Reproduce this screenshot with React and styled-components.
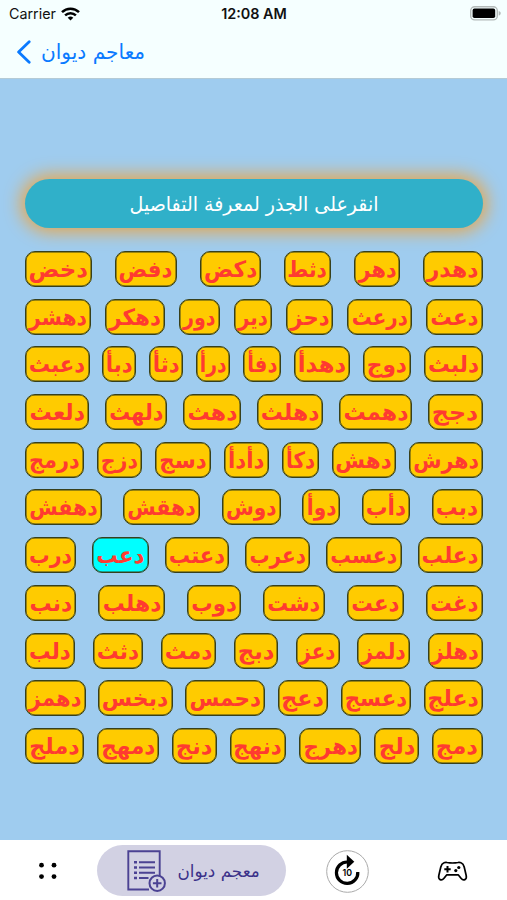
import React, { useLayoutEffect, useRef, useState } from 'react'
import styled, { createGlobalStyle } from 'styled-components'

const rows = [
  [['دهدر', 59.5], ['دهر', 46], ['دثط', 47.5], ['دكض', 61], ['دفض', 62], ['دخض', 67]],
  [['دعث', 56.5], ['درعث', 64.5], ['دحز', 47.5], ['دير', 38], ['دور', 41], ['دهكر', 59.5], ['دهشر', 66]],
  [['دلبث', 59], ['دوج', 48.5], ['دهدأ', 56.5], ['دفأ', 38.5], ['درأ', 34.5], ['دثأ', 34.5], ['دبأ', 34.5], ['دعبث', 64.5]],
  [['دجج', 54.5], ['دهمث', 73], ['دهلث', 66.5], ['دهث', 58], ['دلهث', 62.5], ['دلعث', 64]],
  [['دهرش', 73.5], ['دهش', 64.5], ['دكأ', 37], ['دأدأ', 45], ['دسج', 55.5], ['دزج', 45.5], ['درمج', 59]],
  [['دبب', 50.5], ['دأب', 48.5], ['دوأ', 37.5], ['دوش', 59], ['دهقش', 76.5], ['دهفش', 76.5]],
  [['دعلب', 65], ['دعسب', 75.5], ['دعرب', 65], ['دعتب', 64.5], ['دعب', 56.5], ['درب', 51]],
  [['دغت', 56.5], ['دعت', 56.5], ['دشت', 61.5], ['دوب', 53.5], ['دهلب', 66.5], ['دنب', 51]],
  [['دهلز', 55], ['دلمز', 52.5], ['دعز', 44], ['دبج', 44.5], ['دمث', 55.5], ['دثث', 50.5], ['دلب', 50]],
  [['دعلج', 59], ['دعسج', 70.5], ['دعج', 50.5], ['دحمس', 80], ['دبخس', 74.5], ['دهمز', 60.5]],
  [['دمج', 50.5], ['دلج', 44.5], ['دهرج', 62], ['دنهج', 56.5], ['دنج', 44.5], ['دمهج', 62.5], ['دملج', 58.5]],
]

// Stretches or squeezes a single line of text to the given width
const FitText = ({ width, children }) => {
  const ref = useRef(null)
  const [scale, setScale] = useState(1)

  useLayoutEffect(() => {
    setScale(width / ref.current.offsetWidth)
  }, [width, children])

  return (
    <Fitted ref={ref} style={{ transform: `scaleX(${scale})` }}>
      {children}
    </Fitted>
  )
}

const WifiIcon = () => (
  <svg width="19" height="14" viewBox="0 0 19 14" fill="none" stroke="#000" strokeWidth="2.5">
    <path d="M1 5.2a12.2 12.2 0 0 1 17 0" />
    <path d="M4.1 8.4a7.8 7.8 0 0 1 10.8 0" />
    <path d="M6.7 10.7a4.2 4.2 0 0 1 5.6 0L9.5 13.6z" fill="#000" stroke="none" />
  </svg>
)

const BatteryIcon = () => (
  <svg width="31" height="15" viewBox="0 0 31 15">
    <rect x="0.7" y="0.7" width="26.6" height="13.2" rx="4" fill="#f5ffff" stroke="#b3bab9" strokeWidth="1.4" />
    <rect x="2.6" y="2.6" width="22.6" height="9.4" rx="1.8" fill="#000" />
    <path d="M28.7 5c1.6.4 2 1.4 2 2.3s-.4 1.9-2 2.3z" fill="#b3bab9" />
  </svg>
)

const BackIcon = () => (
  <svg width="15" height="24" viewBox="0 0 15 24" fill="none" stroke="#0a7aff" strokeWidth="2.8">
    <path d="M13.2 1.8L2.6 12l10.6 10.2" strokeLinecap="round" strokeLinejoin="round" />
  </svg>
)

const DotsIcon = () => (
  <svg width="20" height="18" viewBox="0 0 20 18" fill="#000">
    <circle cx="3.5" cy="3.2" r="2.4" />
    <circle cx="16" cy="3.2" r="2.4" />
    <circle cx="3.5" cy="14.6" r="2.4" />
    <circle cx="16" cy="14.6" r="2.4" />
  </svg>
)

const ListAddIcon = () => (
  <svg width="39" height="43" viewBox="0 0 39 43" fill="none" stroke="#4b4293" strokeWidth="1.9">
    <path d="M22 39.5H1.300V1.200h31.400v25" />
    <path d="M12 12.200h16M12 17.500h16M12 22.700h16M12 28h9.500" />
    <path d="M7 12.200h3M7 17.500h3M7 22.700h3M7 28h3" strokeWidth="2.400" />
    <circle cx="30.200" cy="33.200" r="7.700" strokeWidth="2" />
    <path d="M30.200 28.900v8.600M25.900 33.200h8.600" strokeWidth="2" />
  </svg>
)

const SkipIcon = () => (
  <svg width="43" height="43" viewBox="0 0 43 43">
    <circle cx="21.5" cy="21.5" r="20.8" fill="#fff" stroke="#aaa" />
    <path d="M21.5 12a10.700 10.700 0 1 0 10.300 10" fill="none" stroke="#000" strokeWidth="3.200" />
    <path d="M20.800 4.800l7.500 7-7.500 7z" fill="#000" />
    <text x="21.200" y="26.300" textAnchor="middle" fontSize="8.800" fontWeight="600" fontFamily="Inter, sans-serif">10</text>
  </svg>
)

const GamepadIcon = () => (
  <svg width="31" height="21" viewBox="0 0 31 21" fill="none" stroke="#000" strokeWidth="1.7">
    <path d="M7 1.800Q8.600 1 10 1.500q5.500 1 11 0 1.400-.5 3 .3 2.400 1 3.200 4.200l2 8.500c.9 4.200-2.800 5.800-5 3l-3-3.700H9.800l-3 3.700c-2.200 2.800-5.900 1.200-5-3l2-8.500Q4.600 2.800 7 1.800z" strokeLinejoin="round" />
    <path d="M10.500 5v6.400M7.300 8.200h6.400" strokeWidth="2" />
    <circle cx="21.8" cy="6.5" r="1.6" fill="#000" stroke="none" />
    <circle cx="18.8" cy="9.6" r="1.6" fill="#000" stroke="none" />
  </svg>
)

const App = () => {
  const [selected, setSelected] = useState('دعب')

  return (
    <Screen>
      <GlobalStyle />
      <Header>
        <StatusBar>
          <Carrier>Carrier <WifiIcon /></Carrier>
          <Clock>12:08 AM</Clock>
          <Battery><BatteryIcon /></Battery>
        </StatusBar>
        <BackButton>
          <BackIcon />
          <BackLabel><FitText width={104}>معاجم ديوان</FitText></BackLabel>
        </BackButton>
      </Header>
      <Content>
        <Banner><FitText width={249}>انقرعلى الجذر لمعرفة التفاصيل</FitText></Banner>
        <Roots>
          {rows.map((row, i) => (
            <RootRow key={i}>
              {row.map(([word, width]) => (
                <RootButton
                  key={word}
                  $width={width}
                  $active={word === selected}
                  onClick={() => setSelected(word)}
                >
                  <FitText width={width - 8}>{word}</FitText>
                </RootButton>
              ))}
            </RootRow>
          ))}
        </Roots>
      </Content>
      <TabBar>
        <Tab><DotsIcon /></Tab>
        <ActiveTab>
          <ListAddIcon />
          <TabLabel><FitText width={82}>معجم ديوان</FitText></TabLabel>
        </ActiveTab>
        <Tab><SkipIcon /></Tab>
        <Tab><GamepadIcon /></Tab>
      </TabBar>
    </Screen>
  )
}

const GlobalStyle = createGlobalStyle`
  * {
    box-sizing: border-box;
  }

  body {
    margin: 0;
  }

  button {
    border: none;
    padding: 0;
    background: none;
    font-family: inherit;
    cursor: pointer;
  }

  svg {
    display: block;
    flex-shrink: 0;
  }
`

const Screen = styled.div`
  display: flex;
  flex-direction: column;
  width: 507px;
  height: 900px;
  overflow: hidden;
  background: #9fccef;
  font-family: "DejaVu Sans", sans-serif;
`

const Fitted = styled.span`
  display: inline-block;
  flex-shrink: 0;
  white-space: nowrap;
  direction: rtl;
`

const Header = styled.header`
  height: 79px;
  background: #f5ffff;
  border-bottom: 1px solid #b4cbd6;
`

const StatusBar = styled.div`
  display: grid;
  grid-template-columns: 1fr auto 1fr;
  align-items: center;
  height: 27px;
  padding: 0 6px 0 9px;
  font-family: Inter, sans-serif;
  font-size: 14.3px;
  color: #111;
`

const Carrier = styled.div`
  display: flex;
  align-items: center;
  gap: 5.5px;
`

const Clock = styled.div`
  margin-right: 2px;
  font-weight: 600;
  font-size: 14.4px;
`

const Battery = styled.div`
  justify-self: end;
`

const BackButton = styled.button`
  display: flex;
  align-items: center;
  height: 50px;
  margin-left: 16px;
  color: #0a7aff;
`

const BackLabel = styled.span`
  display: flex;
  justify-content: center;
  width: 104px;
  margin-left: 10px;
  font-size: 20.5px;
`

const Content = styled.main`
  flex: 1;
  padding: 100px 24.5px 0 25px;
`

const Banner = styled.div`
  display: flex;
  align-items: center;
  justify-content: center;
  height: 49px;
  border-radius: 25px;
  background: #30b0c9;
  box-shadow: 0 0 17px 4px #e7a64b;
  color: #fff;
  font-size: 20px;
`

const Roots = styled.div`
  display: flex;
  flex-direction: column;
  gap: 11.7px;
  margin-top: 23px;
`

const RootRow = styled.div`
  display: flex;
  justify-content: space-between;
  direction: rtl;
`

const RootButton = styled.button`
  display: flex;
  align-items: center;
  justify-content: center;
  width: ${({ $width }) => $width}px;
  height: 36px;

  && {
    border: 1px solid #37401c;
    border-radius: 10px;
    background: ${({ $active }) => ($active ? '#00ffff' : '#ffcb00')};
    box-shadow: inset 0 0 0 0.5px #37401c;
  }

  color: #ff3b30;
  font-size: 22.5px;
  font-weight: 700;
`

const TabBar = styled.nav`
  display: grid;
  grid-template-columns: 95px 190px 125px 84px;
  align-items: center;
  height: 60px;
  background: #fff;
`

const Tab = styled.button`
  display: flex;
  justify-content: center;

  && {
    padding-top: 2px;
  }
`

const ActiveTab = styled.button`
  display: flex;
  align-items: center;
  gap: 12px;
  width: 189px;
  height: 51px;
  margin-left: 2px;

  && {
    padding: 2px 0 0 30px;
    border-radius: 26px;
    background: #d2d1e3;
  }

  color: #3b3189;
`

const TabLabel = styled.span`
  display: flex;
  justify-content: center;
  width: 82px;
  font-size: 17px;
`

export default App
